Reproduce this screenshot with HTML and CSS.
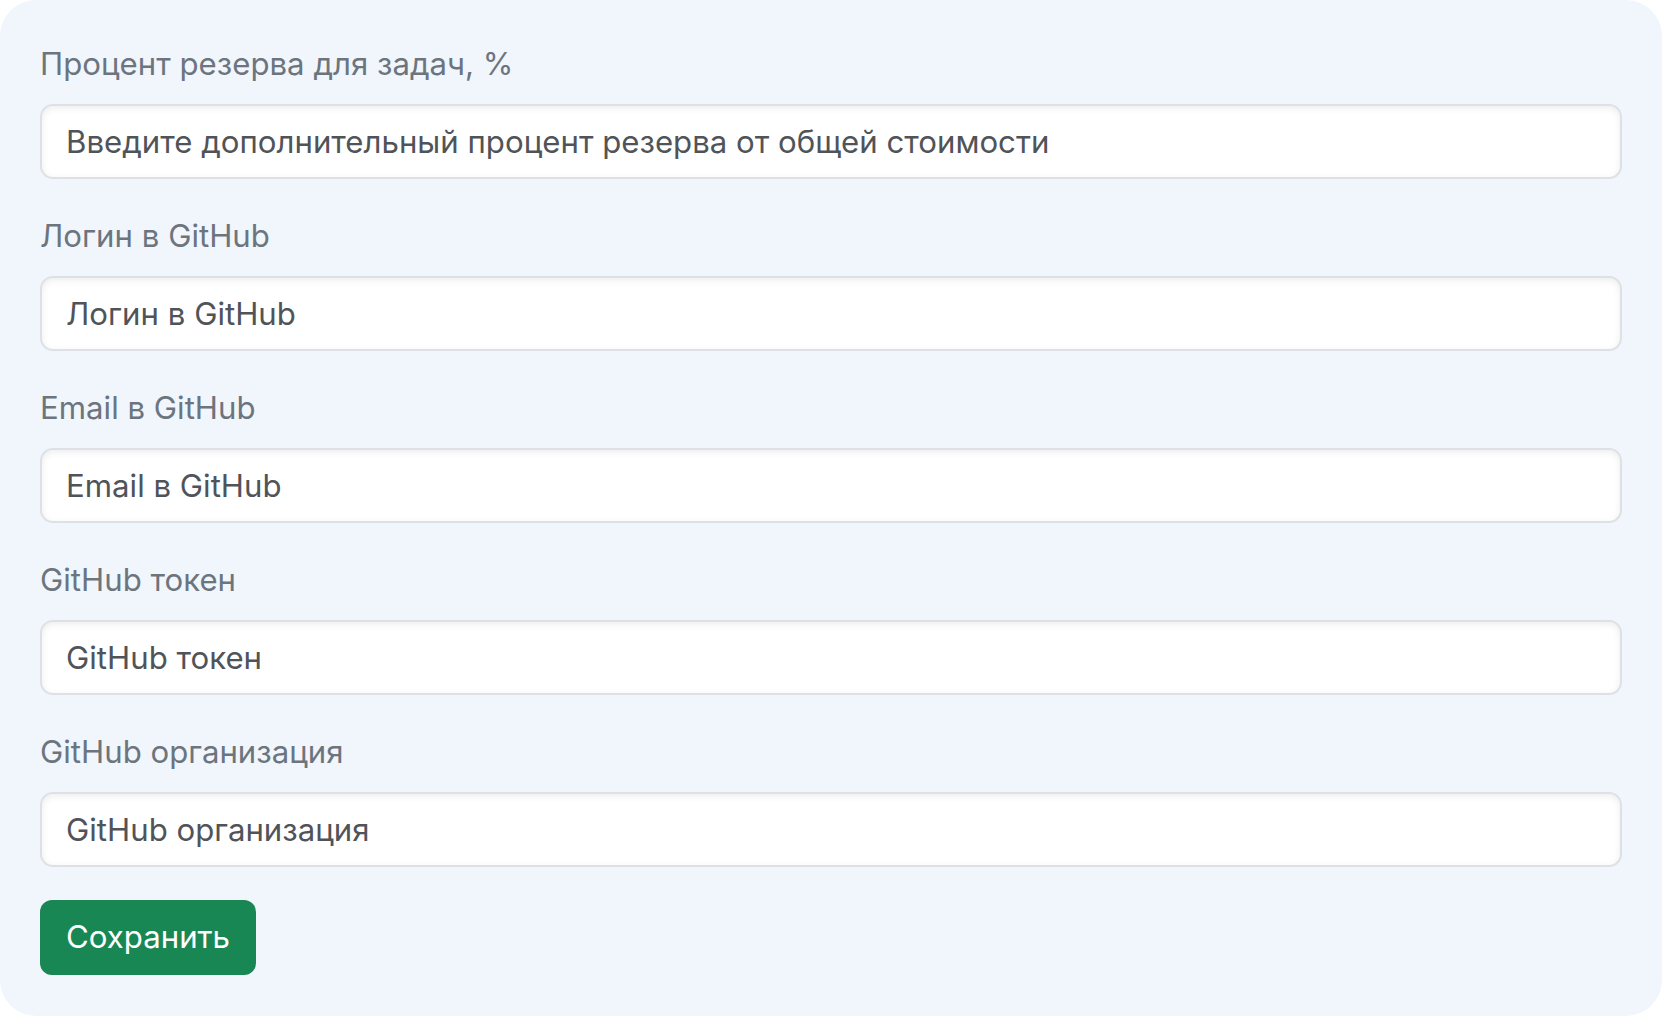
FILE: index.html
```html
<!DOCTYPE html>
<html lang="ru">
<head>
  <meta charset="UTF-8">
  <meta name="viewport" content="width=device-width, initial-scale=1.0">
  <title>Настройки</title>
  <link rel="stylesheet" href="styles.css">
</head>
<body>
  <form class="settings-card">
    <div class="form-group">
      <label for="reserve">Процент резерва для задач, %</label>
      <input type="text" id="reserve" value="Введите дополнительный процент резерва от общей стоимости">
    </div>

    <div class="form-group">
      <label for="gh-login">Логин в GitHub</label>
      <input type="text" id="gh-login" value="Логин в GitHub">
    </div>

    <div class="form-group">
      <label for="gh-email">Email в GitHub</label>
      <input type="text" id="gh-email" value="Email в GitHub">
    </div>

    <div class="form-group">
      <label for="gh-token">GitHub токен</label>
      <input type="text" id="gh-token" value="GitHub токен">
    </div>

    <div class="form-group">
      <label for="gh-org">GitHub организация</label>
      <input type="text" id="gh-org" value="GitHub организация">
    </div>

    <button type="submit">Сохранить</button>
  </form>
</body>
</html>
```

FILE: styles.css
```css
html, body {
  margin: 0;
  background: #fff;
}
body {
  font-family: Inter, "Liberation Sans", sans-serif;
  font-size: 31.2px;
  line-height: 1.5;
}
.settings-card {
  box-sizing: border-box;
  height: 1016px;
  padding: 40px;
  background: #f1f6fd;
  border-radius: 36px;
}
.form-group {
  margin-bottom: 33px;
}
label {
  display: block;
  margin-bottom: 16px;
  color: #6c757d;
  line-height: 48px;
}
input[type="text"] {
  display: block;
  box-sizing: border-box;
  width: 100%;
  height: 75px;
  padding: 0 24px;
  font: inherit;
  color: #505459;
  background: #fff;
  border: 2px solid #dde1e6;
  border-radius: 13px;
  box-shadow: inset 0 2px 7px rgba(0, 0, 0, 0.08);
  outline: none;
}
button {
  height: 75px;
  padding: 0 26px;
  font: inherit;
  color: #fff;
  background: #198754;
  border: none;
  border-radius: 12px;
  cursor: pointer;
}
```
